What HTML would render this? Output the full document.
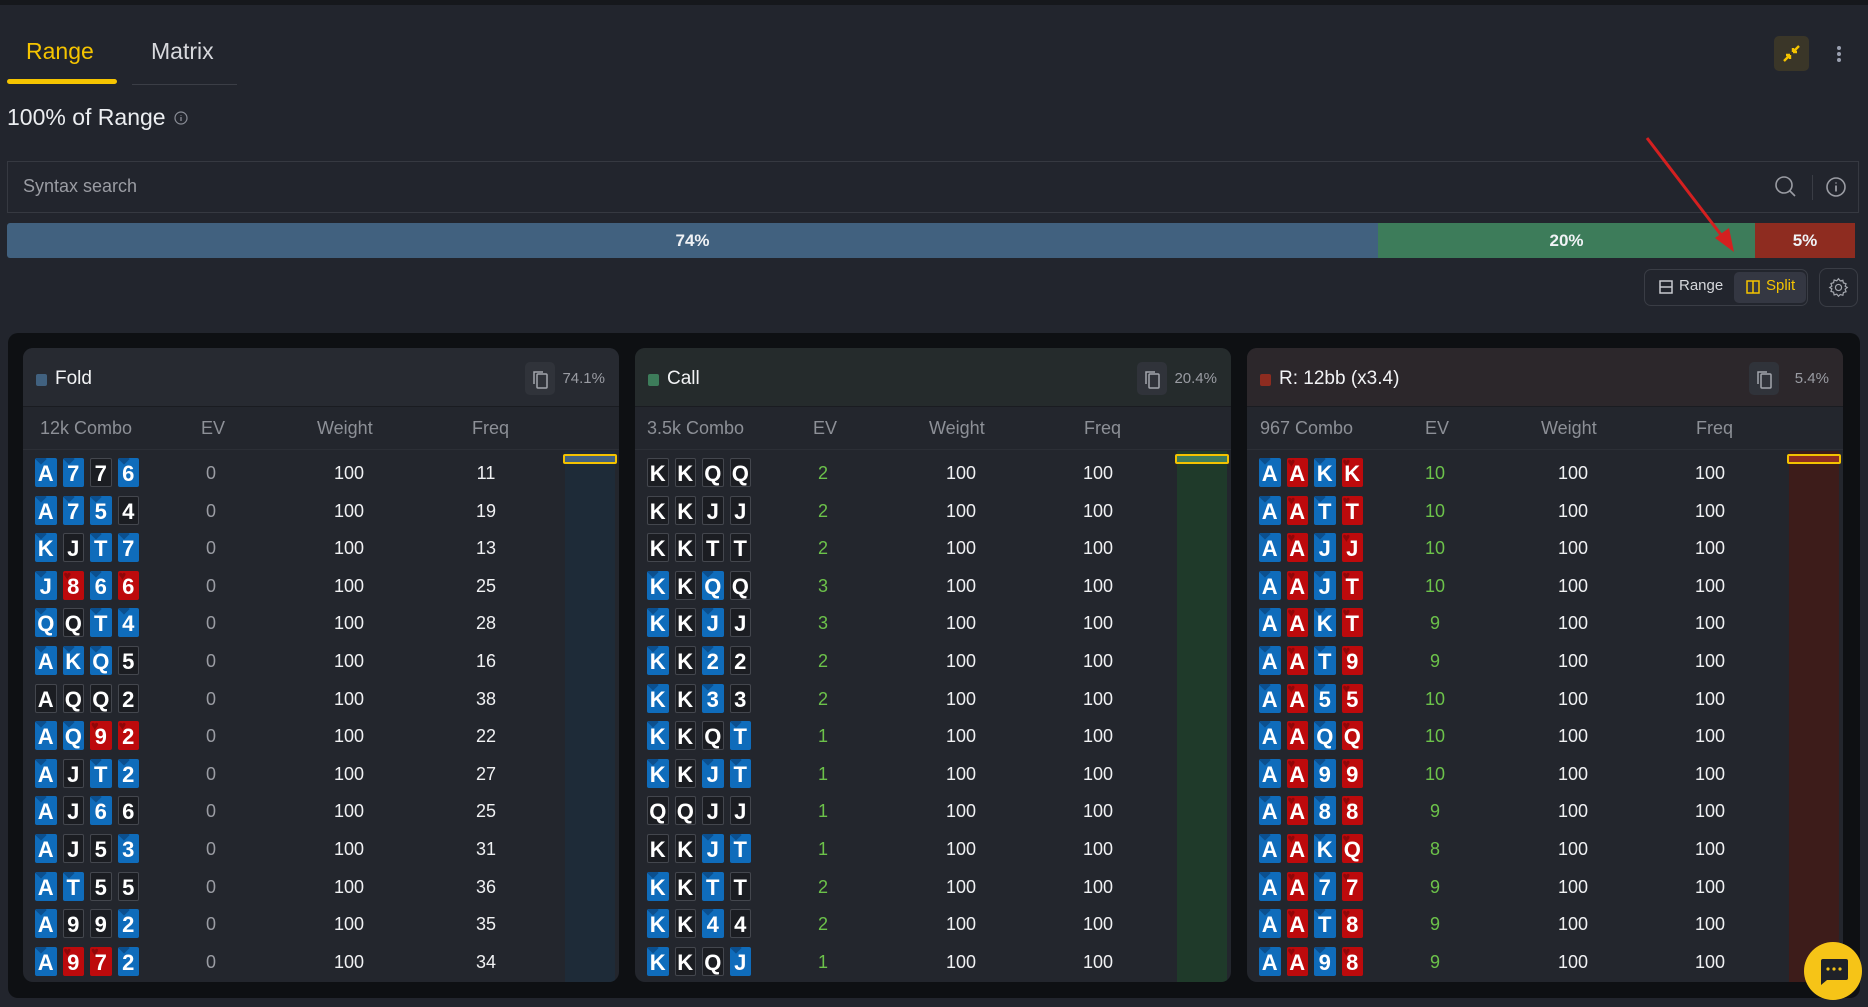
<!DOCTYPE html>
<html><head><meta charset="utf-8"><style>
*{box-sizing:border-box;margin:0;padding:0}
body{width:1868px;height:1007px;overflow:hidden;background:#22252d;font-family:"Liberation Sans",sans-serif;color:#e8e9ec;position:relative}
.abs{position:absolute}
.top{left:0;top:0;width:1868px;height:5px;background:#16181c}
.tab{font-size:23px;top:38px}
.outer{left:8px;top:333px;width:1852px;height:665px;background:#0e1013;border-radius:10px}
.panel{position:absolute;top:348px;width:596px;height:634px;background:#23262d;border-radius:10px;overflow:hidden}
.ph{height:59px;border-bottom:1px solid #1a1c21;position:relative}
.sq{position:absolute;left:13px;top:26px;width:11px;height:12px;border-radius:2px}
.ttl{position:absolute;left:32px;top:20px;font-size:19px;color:#f2f3f5}
.cp{position:absolute;left:502px;top:14px;width:30px;height:33px;background:#30333a;border-radius:5px}
.pct{position:absolute;right:14px;top:22px;font-size:15px;color:#9a9ca3}
.ch{height:43px;border-bottom:1px solid #2c2f36;position:relative;color:#8d9097;font-size:18px}
.ch span,.row span{position:absolute;top:11px}
.sp{height:5px}
.row{height:37.6px;position:relative;font-size:18px}
.row span{top:8px;transform:translateX(-50%);color:#f0f1f3}
.row span.ev{color:#9a9ca3}
.row span.g{color:#6cc24a}
.cards{position:absolute;left:12px;top:3px;display:flex;gap:6px}
.c{width:21.5px;height:29px;border-radius:2px;font:bold 22px/31px "Liberation Sans",sans-serif;color:#fff;text-align:center;position:relative;font-style:normal;overflow:hidden}
.c.d{background:#0f6cbb}
.c.h{background:#bd0a0c}
.c.s{background:#1b1d22;border:1px solid #44474e;line-height:29px}
.c.d::before{content:"";position:absolute;left:2px;top:-3px;width:8px;height:8px;background:#0b4f8e;transform:rotate(45deg)}
.c.h::before{content:"♥";position:absolute;left:1px;top:-11px;font-size:13px;color:#8e0709}
.c b{position:relative}
.bar{position:absolute;left:542px;top:104px;width:50px;height:540px}
.bar i{position:absolute;left:-2px;top:3px;width:54px;height:10px;border:2px solid #f3c200;border-radius:2px}
</style></head><body>
<div class="abs top"></div>
<div class="abs tab" style="left:26px;color:#f5c400">Range</div>
<div class="abs tab" style="left:151px;color:#d8d9dd">Matrix</div>
<div class="abs" style="left:7px;top:79px;width:110px;height:5px;background:#f5c400;border-radius:3px"></div>
<div class="abs" style="left:132px;top:84px;width:105px;height:1px;background:#3b3e46"></div>
<div class="abs" style="left:7px;top:104px;font-size:23px;color:#eceef1">100% of Range</div>
<svg class="abs" style="left:174px;top:111px" width="14" height="14"><circle cx="7" cy="7" r="6" fill="none" stroke="#8a8d96" stroke-width="1.2"/><path d="M7 6v4M7 4v.6" stroke="#8a8d96" stroke-width="1.3"/></svg>
<div class="abs" style="left:1774px;top:36px;width:35px;height:35px;background:#3a3628;border-radius:5px"></div>
<svg class="abs" style="left:1781px;top:43px" width="21" height="21"><path d="M3 18L9 12M9 12H5M9 12V16M18 3L12 9M12 9H16M12 9V5" stroke="#f5c400" stroke-width="2.4" fill="none"/></svg>
<div class="abs" style="left:1837px;top:46px;width:4px;height:4px;border-radius:2px;background:#9aa0b0;box-shadow:0 6px 0 #9aa0b0,0 12px 0 #9aa0b0"></div>
<div class="abs" style="left:7px;top:161px;width:1852px;height:52px;border:1px solid #363941"></div>
<div class="abs" style="left:23px;top:176px;font-size:18px;color:#9a9ca3">Syntax search</div>
<svg class="abs" style="left:1774px;top:175px" width="24" height="24"><circle cx="10" cy="10" r="8" fill="none" stroke="#9a9ca3" stroke-width="1.6"/><path d="M16 16l5 5" stroke="#9a9ca3" stroke-width="1.6"/></svg>
<div class="abs" style="left:1812px;top:175px;width:1px;height:25px;background:#3a3d45"></div>
<svg class="abs" style="left:1825px;top:176px" width="22" height="22"><circle cx="11" cy="11" r="9" fill="none" stroke="#9a9ca3" stroke-width="1.6"/><path d="M11 9.5v6M11 6.5v1" stroke="#9a9ca3" stroke-width="1.8"/></svg>
<div class="abs" style="left:7px;top:223px;width:1371px;height:35px;background:#41617f;border-radius:3px 0 0 3px;text-align:center;font:bold 17px/35px 'Liberation Sans',sans-serif;color:#f0f2f5">74%</div>
<div class="abs" style="left:1378px;top:223px;width:377px;height:35px;background:#3d7c5a;text-align:center;font:bold 17px/35px 'Liberation Sans',sans-serif;color:#f0f2f5">20%</div>
<div class="abs" style="left:1755px;top:223px;width:100px;height:35px;background:#8e2c20;text-align:center;font:bold 17px/35px 'Liberation Sans',sans-serif;color:#f0f2f5">5%</div>
<svg class="abs" style="left:0;top:0" width="1868" height="300"><path d="M1647 138L1725 240" stroke="#d42020" stroke-width="3"/><path d="M1734 252L1715 238L1729 228Z" fill="#d42020"/></svg>
<div class="abs" style="left:1644px;top:269px;width:164px;height:37px;border:1px solid #3a3d45;border-radius:7px"></div>
<div class="abs" style="left:1734px;top:272px;width:72px;height:31px;background:#343742;border-radius:5px"></div>
<svg class="abs" style="left:1659px;top:280px" width="14" height="14"><rect x="1" y="1" width="12" height="12" fill="none" stroke="#c7c9ce" stroke-width="1.5"/><path d="M1 7h12" stroke="#c7c9ce" stroke-width="1.5"/></svg>
<div class="abs" style="left:1679px;top:277px;font-size:15px;color:#d5d7db">Range</div>
<svg class="abs" style="left:1746px;top:280px" width="14" height="14"><rect x="1" y="1" width="12" height="12" fill="none" stroke="#f5c400" stroke-width="1.5"/><path d="M7 1v12" stroke="#f5c400" stroke-width="1.5"/></svg>
<div class="abs" style="left:1766px;top:277px;font-size:15px;color:#f5c400">Split</div>
<div class="abs" style="left:1819px;top:268px;width:39px;height:39px;border:1px solid #3a3d45;border-radius:8px"></div>
<svg class="abs" style="left:1828px;top:277px" width="21" height="21" viewBox="0 0 24 24"><path d="M12 2l2 2.5 3-.8.6 3 3 1-1 2.9L22 12l-2.4 1.9 1 2.9-3 1-.6 3-3-.8L12 22l-2-2.4-3 .8-.6-3-3-1 1-2.9L2 12l2.4-1.600-1-2.9 3-1 .6-3 3 .8z" fill="none" stroke="#a3a6ad" stroke-width="1.4"/><circle cx="12" cy="12" r="3.5" fill="none" stroke="#a3a6ad" stroke-width="1.4"/></svg>
<div class="abs outer"></div>

<div class="panel" style="left:23px">
<div class="ph" style="background:#272a31"><div class="sq" style="background:#41617f"></div><div class="ttl">Fold</div><div class="cp"></div><svg class="abs" style="left:509px;top:22px" width="17" height="19"><rect x="5" y="4" width="10" height="14" rx="1" fill="none" stroke="#a3a6ad" stroke-width="1.5"/><path d="M2 14V2h9" fill="none" stroke="#a3a6ad" stroke-width="1.5"/></svg><div class="pct">74.1%</div></div>
<div class="ch"><span style="left:17px">12k Combo</span><span style="left:178px">EV</span><span style="left:294px">Weight</span><span style="left:449px">Freq</span></div>
<div class="bar" style="background:#1e2b38;top:103px"><i style="background:#41617f"></i></div>
<div class="sp"></div>
<div class="row"><div class="cards"><i class="c d"><b>A</b></i><i class="c d"><b>7</b></i><i class="c s"><b>7</b></i><i class="c d"><b>6</b></i></div><span class="ev" style="left:188px">0</span><span style="left:326px">100</span><span style="left:463px">11</span></div>
<div class="row"><div class="cards"><i class="c d"><b>A</b></i><i class="c d"><b>7</b></i><i class="c d"><b>5</b></i><i class="c s"><b>4</b></i></div><span class="ev" style="left:188px">0</span><span style="left:326px">100</span><span style="left:463px">19</span></div>
<div class="row"><div class="cards"><i class="c d"><b>K</b></i><i class="c s"><b>J</b></i><i class="c d"><b>T</b></i><i class="c d"><b>7</b></i></div><span class="ev" style="left:188px">0</span><span style="left:326px">100</span><span style="left:463px">13</span></div>
<div class="row"><div class="cards"><i class="c d"><b>J</b></i><i class="c h"><b>8</b></i><i class="c d"><b>6</b></i><i class="c h"><b>6</b></i></div><span class="ev" style="left:188px">0</span><span style="left:326px">100</span><span style="left:463px">25</span></div>
<div class="row"><div class="cards"><i class="c d"><b>Q</b></i><i class="c s"><b>Q</b></i><i class="c d"><b>T</b></i><i class="c d"><b>4</b></i></div><span class="ev" style="left:188px">0</span><span style="left:326px">100</span><span style="left:463px">28</span></div>
<div class="row"><div class="cards"><i class="c d"><b>A</b></i><i class="c d"><b>K</b></i><i class="c d"><b>Q</b></i><i class="c s"><b>5</b></i></div><span class="ev" style="left:188px">0</span><span style="left:326px">100</span><span style="left:463px">16</span></div>
<div class="row"><div class="cards"><i class="c s"><b>A</b></i><i class="c s"><b>Q</b></i><i class="c s"><b>Q</b></i><i class="c s"><b>2</b></i></div><span class="ev" style="left:188px">0</span><span style="left:326px">100</span><span style="left:463px">38</span></div>
<div class="row"><div class="cards"><i class="c d"><b>A</b></i><i class="c d"><b>Q</b></i><i class="c h"><b>9</b></i><i class="c h"><b>2</b></i></div><span class="ev" style="left:188px">0</span><span style="left:326px">100</span><span style="left:463px">22</span></div>
<div class="row"><div class="cards"><i class="c d"><b>A</b></i><i class="c s"><b>J</b></i><i class="c d"><b>T</b></i><i class="c d"><b>2</b></i></div><span class="ev" style="left:188px">0</span><span style="left:326px">100</span><span style="left:463px">27</span></div>
<div class="row"><div class="cards"><i class="c d"><b>A</b></i><i class="c s"><b>J</b></i><i class="c d"><b>6</b></i><i class="c s"><b>6</b></i></div><span class="ev" style="left:188px">0</span><span style="left:326px">100</span><span style="left:463px">25</span></div>
<div class="row"><div class="cards"><i class="c d"><b>A</b></i><i class="c s"><b>J</b></i><i class="c s"><b>5</b></i><i class="c d"><b>3</b></i></div><span class="ev" style="left:188px">0</span><span style="left:326px">100</span><span style="left:463px">31</span></div>
<div class="row"><div class="cards"><i class="c d"><b>A</b></i><i class="c d"><b>T</b></i><i class="c s"><b>5</b></i><i class="c s"><b>5</b></i></div><span class="ev" style="left:188px">0</span><span style="left:326px">100</span><span style="left:463px">36</span></div>
<div class="row"><div class="cards"><i class="c d"><b>A</b></i><i class="c s"><b>9</b></i><i class="c s"><b>9</b></i><i class="c d"><b>2</b></i></div><span class="ev" style="left:188px">0</span><span style="left:326px">100</span><span style="left:463px">35</span></div>
<div class="row"><div class="cards"><i class="c d"><b>A</b></i><i class="c h"><b>9</b></i><i class="c h"><b>7</b></i><i class="c d"><b>2</b></i></div><span class="ev" style="left:188px">0</span><span style="left:326px">100</span><span style="left:463px">34</span></div>
<div class="row"><div class="cards"><i class="c d"><b>A</b></i><i class="c d"><b>9</b></i><i class="c d"><b>7</b></i><i class="c s"><b>2</b></i></div></div>
</div>

<div class="panel" style="left:635px">
<div class="ph" style="background:#252b2c"><div class="sq" style="background:#3d7c5a"></div><div class="ttl">Call</div><div class="cp"></div><svg class="abs" style="left:509px;top:22px" width="17" height="19"><rect x="5" y="4" width="10" height="14" rx="1" fill="none" stroke="#a3a6ad" stroke-width="1.5"/><path d="M2 14V2h9" fill="none" stroke="#a3a6ad" stroke-width="1.5"/></svg><div class="pct">20.4%</div></div>
<div class="ch"><span style="left:12px">3.5k Combo</span><span style="left:178px">EV</span><span style="left:294px">Weight</span><span style="left:449px">Freq</span></div>
<div class="bar" style="background:#1f3a2a;top:103px"><i style="background:#3d7c5a"></i></div>
<div class="sp"></div>
<div class="row"><div class="cards"><i class="c s"><b>K</b></i><i class="c s"><b>K</b></i><i class="c s"><b>Q</b></i><i class="c s"><b>Q</b></i></div><span class="g" style="left:188px">2</span><span style="left:326px">100</span><span style="left:463px">100</span></div>
<div class="row"><div class="cards"><i class="c s"><b>K</b></i><i class="c s"><b>K</b></i><i class="c s"><b>J</b></i><i class="c s"><b>J</b></i></div><span class="g" style="left:188px">2</span><span style="left:326px">100</span><span style="left:463px">100</span></div>
<div class="row"><div class="cards"><i class="c s"><b>K</b></i><i class="c s"><b>K</b></i><i class="c s"><b>T</b></i><i class="c s"><b>T</b></i></div><span class="g" style="left:188px">2</span><span style="left:326px">100</span><span style="left:463px">100</span></div>
<div class="row"><div class="cards"><i class="c d"><b>K</b></i><i class="c s"><b>K</b></i><i class="c d"><b>Q</b></i><i class="c s"><b>Q</b></i></div><span class="g" style="left:188px">3</span><span style="left:326px">100</span><span style="left:463px">100</span></div>
<div class="row"><div class="cards"><i class="c d"><b>K</b></i><i class="c s"><b>K</b></i><i class="c d"><b>J</b></i><i class="c s"><b>J</b></i></div><span class="g" style="left:188px">3</span><span style="left:326px">100</span><span style="left:463px">100</span></div>
<div class="row"><div class="cards"><i class="c d"><b>K</b></i><i class="c s"><b>K</b></i><i class="c d"><b>2</b></i><i class="c s"><b>2</b></i></div><span class="g" style="left:188px">2</span><span style="left:326px">100</span><span style="left:463px">100</span></div>
<div class="row"><div class="cards"><i class="c d"><b>K</b></i><i class="c s"><b>K</b></i><i class="c d"><b>3</b></i><i class="c s"><b>3</b></i></div><span class="g" style="left:188px">2</span><span style="left:326px">100</span><span style="left:463px">100</span></div>
<div class="row"><div class="cards"><i class="c d"><b>K</b></i><i class="c s"><b>K</b></i><i class="c s"><b>Q</b></i><i class="c d"><b>T</b></i></div><span class="g" style="left:188px">1</span><span style="left:326px">100</span><span style="left:463px">100</span></div>
<div class="row"><div class="cards"><i class="c d"><b>K</b></i><i class="c s"><b>K</b></i><i class="c d"><b>J</b></i><i class="c d"><b>T</b></i></div><span class="g" style="left:188px">1</span><span style="left:326px">100</span><span style="left:463px">100</span></div>
<div class="row"><div class="cards"><i class="c s"><b>Q</b></i><i class="c s"><b>Q</b></i><i class="c s"><b>J</b></i><i class="c s"><b>J</b></i></div><span class="g" style="left:188px">1</span><span style="left:326px">100</span><span style="left:463px">100</span></div>
<div class="row"><div class="cards"><i class="c s"><b>K</b></i><i class="c s"><b>K</b></i><i class="c d"><b>J</b></i><i class="c d"><b>T</b></i></div><span class="g" style="left:188px">1</span><span style="left:326px">100</span><span style="left:463px">100</span></div>
<div class="row"><div class="cards"><i class="c d"><b>K</b></i><i class="c s"><b>K</b></i><i class="c d"><b>T</b></i><i class="c s"><b>T</b></i></div><span class="g" style="left:188px">2</span><span style="left:326px">100</span><span style="left:463px">100</span></div>
<div class="row"><div class="cards"><i class="c d"><b>K</b></i><i class="c s"><b>K</b></i><i class="c d"><b>4</b></i><i class="c s"><b>4</b></i></div><span class="g" style="left:188px">2</span><span style="left:326px">100</span><span style="left:463px">100</span></div>
<div class="row"><div class="cards"><i class="c d"><b>K</b></i><i class="c s"><b>K</b></i><i class="c s"><b>Q</b></i><i class="c d"><b>J</b></i></div><span class="g" style="left:188px">1</span><span style="left:326px">100</span><span style="left:463px">100</span></div>
<div class="row"><div class="cards"><i class="c d"><b>K</b></i><i class="c s"><b>K</b></i><i class="c d"><b>Q</b></i><i class="c d"><b>9</b></i></div></div>
</div>

<div class="panel" style="left:1247px">
<div class="ph" style="background:#2c272b"><div class="sq" style="background:#8e2c20"></div><div class="ttl">R: 12bb (x3.4)</div><div class="cp"></div><svg class="abs" style="left:509px;top:22px" width="17" height="19"><rect x="5" y="4" width="10" height="14" rx="1" fill="none" stroke="#a3a6ad" stroke-width="1.5"/><path d="M2 14V2h9" fill="none" stroke="#a3a6ad" stroke-width="1.5"/></svg><div class="pct">5.4%</div></div>
<div class="ch"><span style="left:13px">967 Combo</span><span style="left:178px">EV</span><span style="left:294px">Weight</span><span style="left:449px">Freq</span></div>
<div class="bar" style="background:#3d1c1a;top:103px"><i style="background:#8e2c20"></i></div>
<div class="sp"></div>
<div class="row"><div class="cards"><i class="c d"><b>A</b></i><i class="c h"><b>A</b></i><i class="c d"><b>K</b></i><i class="c h"><b>K</b></i></div><span class="g" style="left:188px">10</span><span style="left:326px">100</span><span style="left:463px">100</span></div>
<div class="row"><div class="cards"><i class="c d"><b>A</b></i><i class="c h"><b>A</b></i><i class="c d"><b>T</b></i><i class="c h"><b>T</b></i></div><span class="g" style="left:188px">10</span><span style="left:326px">100</span><span style="left:463px">100</span></div>
<div class="row"><div class="cards"><i class="c d"><b>A</b></i><i class="c h"><b>A</b></i><i class="c d"><b>J</b></i><i class="c h"><b>J</b></i></div><span class="g" style="left:188px">10</span><span style="left:326px">100</span><span style="left:463px">100</span></div>
<div class="row"><div class="cards"><i class="c d"><b>A</b></i><i class="c h"><b>A</b></i><i class="c d"><b>J</b></i><i class="c h"><b>T</b></i></div><span class="g" style="left:188px">10</span><span style="left:326px">100</span><span style="left:463px">100</span></div>
<div class="row"><div class="cards"><i class="c d"><b>A</b></i><i class="c h"><b>A</b></i><i class="c d"><b>K</b></i><i class="c h"><b>T</b></i></div><span class="g" style="left:188px">9</span><span style="left:326px">100</span><span style="left:463px">100</span></div>
<div class="row"><div class="cards"><i class="c d"><b>A</b></i><i class="c h"><b>A</b></i><i class="c d"><b>T</b></i><i class="c h"><b>9</b></i></div><span class="g" style="left:188px">9</span><span style="left:326px">100</span><span style="left:463px">100</span></div>
<div class="row"><div class="cards"><i class="c d"><b>A</b></i><i class="c h"><b>A</b></i><i class="c d"><b>5</b></i><i class="c h"><b>5</b></i></div><span class="g" style="left:188px">10</span><span style="left:326px">100</span><span style="left:463px">100</span></div>
<div class="row"><div class="cards"><i class="c d"><b>A</b></i><i class="c h"><b>A</b></i><i class="c d"><b>Q</b></i><i class="c h"><b>Q</b></i></div><span class="g" style="left:188px">10</span><span style="left:326px">100</span><span style="left:463px">100</span></div>
<div class="row"><div class="cards"><i class="c d"><b>A</b></i><i class="c h"><b>A</b></i><i class="c d"><b>9</b></i><i class="c h"><b>9</b></i></div><span class="g" style="left:188px">10</span><span style="left:326px">100</span><span style="left:463px">100</span></div>
<div class="row"><div class="cards"><i class="c d"><b>A</b></i><i class="c h"><b>A</b></i><i class="c d"><b>8</b></i><i class="c h"><b>8</b></i></div><span class="g" style="left:188px">9</span><span style="left:326px">100</span><span style="left:463px">100</span></div>
<div class="row"><div class="cards"><i class="c d"><b>A</b></i><i class="c h"><b>A</b></i><i class="c d"><b>K</b></i><i class="c h"><b>Q</b></i></div><span class="g" style="left:188px">8</span><span style="left:326px">100</span><span style="left:463px">100</span></div>
<div class="row"><div class="cards"><i class="c d"><b>A</b></i><i class="c h"><b>A</b></i><i class="c d"><b>7</b></i><i class="c h"><b>7</b></i></div><span class="g" style="left:188px">9</span><span style="left:326px">100</span><span style="left:463px">100</span></div>
<div class="row"><div class="cards"><i class="c d"><b>A</b></i><i class="c h"><b>A</b></i><i class="c d"><b>T</b></i><i class="c h"><b>8</b></i></div><span class="g" style="left:188px">9</span><span style="left:326px">100</span><span style="left:463px">100</span></div>
<div class="row"><div class="cards"><i class="c d"><b>A</b></i><i class="c h"><b>A</b></i><i class="c d"><b>9</b></i><i class="c h"><b>8</b></i></div><span class="g" style="left:188px">9</span><span style="left:326px">100</span><span style="left:463px">100</span></div>
<div class="row"><div class="cards"><i class="c d"><b>A</b></i><i class="c h"><b>A</b></i><i class="c d"><b>7</b></i><i class="c h"><b>6</b></i></div></div>
</div>

<div class="abs" style="left:1804px;top:942px;width:58px;height:58px;border-radius:50%;background:#f6c417"></div>
<svg class="abs" style="left:1818px;top:958px" width="31" height="28"><path d="M3 1h25a2 2 0 0 1 2 2v17a2 2 0 0 1-2 2H9l-6 5V3a2 2 0 0 1 2-2z" fill="#1f2128"/><circle cx="10" cy="11" r="1.6" fill="#f6c417"/><circle cx="16" cy="11" r="1.6" fill="#f6c417"/><circle cx="22" cy="11" r="1.6" fill="#f6c417"/></svg>
</body></html>
